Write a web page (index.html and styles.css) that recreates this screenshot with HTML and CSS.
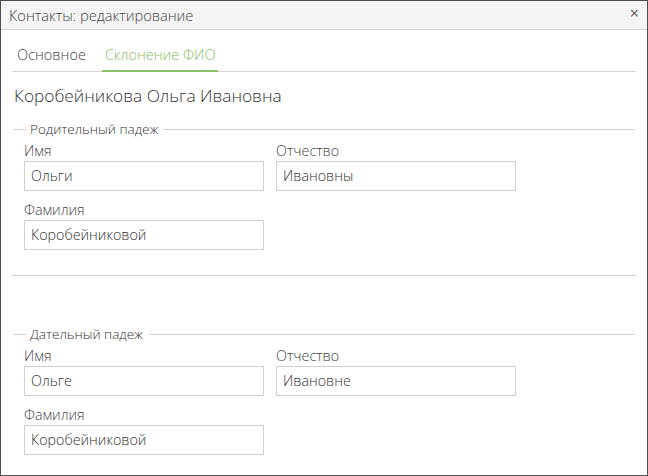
FILE: index.html
```html
<!DOCTYPE html>
<html lang="ru">
<head>
<meta charset="utf-8">
<link rel="stylesheet" href="styles.css">
</head>
<body>
<div class="window">
  <div class="header">
    <span class="title">Контакты: редактирование</span>
    <span class="close">×</span>
  </div>
  <div class="tabs">
    <span class="tab">Основное</span>
    <span class="tab active">Склонение ФИО</span>
  </div>
  <div class="fullname">Коробейникова Ольга Ивановна</div>

  <div class="group">
    <div class="legend"><span class="legend-text">Родительный падеж</span></div>
    <div class="row">
      <div class="field"><div class="label">Имя</div><div class="input">Ольги</div></div>
      <div class="field"><div class="label">Отчество</div><div class="input">Ивановны</div></div>
    </div>
    <div class="row">
      <div class="field"><div class="label">Фамилия</div><div class="input">Коробейниковой</div></div>
    </div>
  </div>
  <div class="separator"></div>

  <div class="group second">
    <div class="legend"><span class="legend-text">Дательный падеж</span></div>
    <div class="row">
      <div class="field"><div class="label">Имя</div><div class="input">Ольге</div></div>
      <div class="field"><div class="label">Отчество</div><div class="input">Ивановне</div></div>
    </div>
    <div class="row">
      <div class="field"><div class="label">Фамилия</div><div class="input">Коробейниковой</div></div>
    </div>
  </div>
</div>
</body>
</html>
```

FILE: styles.css
```css
html, body {
  margin: 0;
  padding: 0;
  background: #ffffff;
}
body {
  font-family: "Open Sans", "Noto Sans", sans-serif;
  font-weight: 300;
  color: #444;
}
.window {
  width: 648px;
  height: 476px;
  box-sizing: border-box;
  border: 1px solid #4d4d4d;
  background: #fff;
  overflow: hidden;
}
.header {
  height: 28px;
  background: #f4f4f4;
  border-bottom: 1px solid #d6d6d6;
  display: flex;
  align-items: center;
  justify-content: space-between;
  padding: 0 8px 0 8px;
}
.title {
  font-size: 14.6px;
  color: #444;
}
.close {
  font-size: 16px;
  color: #555;
  line-height: 1;
  margin-top: -4px;
  font-weight: 400;
}
.tabs {
  margin: 11px 11px 0 11px;
  border-bottom: 1px solid #d4d4d4;
  display: flex;
  height: 31px;
  box-sizing: border-box;
}
.tab {
  font-size: 14.5px;
  color: #444;
  padding: 4px 10px 0 5px;
  box-sizing: border-box;
}
.tab.active {
  color: #88c060;
  border-bottom: 2px solid #8cc265;
  margin-bottom: -1px;
  padding: 4px 2px 0 3px;
  margin-left: 6px;
}
.fullname {
  font-size: 17.3px;
  color: #333;
  margin: 12px 0 0 13px;
  line-height: 24px;
}
.group {
  margin: 12px 12px 0 12px;
}
.group.second {
  margin-top: 49px;
}
.legend {
  display: flex;
  align-items: center;
  height: 18px;
}
.legend::before {
  content: "";
  width: 12px;
  border-top: 1px solid #cfcfcf;
  margin: 0 4px 0 1px;
}
.legend::after {
  content: "";
  flex: 1;
  border-top: 1px solid #cfcfcf;
  margin-left: 6px;
}
.legend-text {
  font-size: 13.5px;
  color: #333;
}
.row {
  display: flex;
  gap: 12px;
  padding-left: 11px;
  margin-top: 3px;
}
.row + .row {
  margin-top: 9px;
}
.field {
  width: 240px;
}
.label {
  font-size: 14.3px;
  color: #444;
  line-height: 19px;
  margin-bottom: 1px;
}
.input {
  height: 30px;
  box-sizing: border-box;
  border: 1px solid #cfcfcf;
  padding: 0 6px;
  font-size: 14.3px;
  line-height: 28px;
  color: #333;
}
.separator {
  margin: 25px 11px 0 11px;
  border-top: 1px solid #cfcfcf;
}
```
